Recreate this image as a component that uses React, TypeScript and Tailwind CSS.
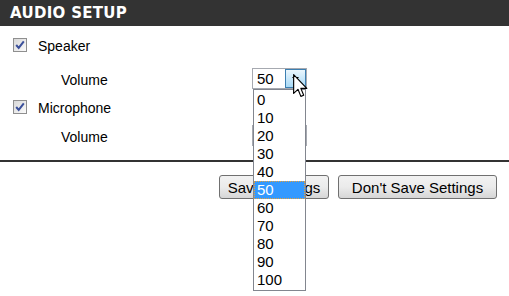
import React from "react";

const volumes = ["0", "10", "20", "30", "40", "50", "60", "70", "80", "90", "100"];

function CheckBox() {
  return (
    <span className="relative inline-block w-[14px] h-[14px] border border-[#8f8f8f] bg-gradient-to-br from-[#d8d8d8] to-[#fbfbfb]">
      <svg viewBox="0 0 14 14" className="absolute -left-px -top-px w-[14px] h-[14px]">
        <path d="M3.2 7 L5.7 9.9 L10.8 3.4" fill="none" stroke="#3a4f9a" strokeWidth="2" />
      </svg>
    </span>
  );
}

function SelectBox({ open }: { open?: boolean }) {
  return (
    <div className="relative w-[55px] h-[21px] border border-[#a6a9b0] bg-white flex items-center">
      <span className="pl-[4px] text-[15px] leading-none text-black">50</span>
      <div
        className={`absolute right-0 top-0 w-[21px] h-[19px] flex items-center justify-center ${
          open
            ? "border border-[#3c7fb1] bg-gradient-to-b from-[#eaf6fd] to-[#a7d9f5]"
            : "border border-[#b8b8b8] bg-gradient-to-b from-[#f2f2f2] to-[#d8d8d8]"
        }`}
      >
        <svg viewBox="0 0 7 4" className="w-[7px] h-[4px]">
          <path d="M0 0 H7 L3.5 4 Z" fill="#000" />
        </svg>
      </div>
    </div>
  );
}

function Cursor() {
  return (
    <svg viewBox="0 0 13 21" className="w-[15px] h-[24px]">
      <path
        d="M0.5 0.5 V17 L4.3 13.4 L6.8 19.6 L9.3 18.6 L6.8 12.6 L12 12.6 Z"
        fill="#fff"
        stroke="#000"
        strokeWidth="1"
        strokeLinejoin="round"
      />
    </svg>
  );
}

function Button({ label, width }: { label: string; width: string }) {
  return (
    <button
      className={`${width} h-[24px] rounded-[3px] border border-[#707070] bg-gradient-to-b from-[#f2f2f2] via-[#ebebeb] to-[#d6d6d6] text-[15px] leading-none text-black flex items-center justify-center`}
    >
      {label}
    </button>
  );
}

export default function App() {
  return (
    <div className="relative w-[509px] h-[296px] bg-white overflow-hidden font-['Liberation_Sans',Arial,sans-serif] text-[14px] text-black">
      {/* Header */}
      <div className="h-[26px] bg-[#333333] flex items-center pl-[10px]">
        <span className="text-white font-['DejaVu_Sans',Verdana,sans-serif] font-bold text-[15px] tracking-[0.3px] leading-none">
          AUDIO SETUP
        </span>
      </div>

      {/* Settings rows */}
      <div className="pt-[8px]">
        <div className="h-[22px] flex items-center pl-[13px] gap-[11px]">
          <CheckBox />
          <span className="pt-[3px]">Speaker</span>
        </div>
        <div className="mt-[12px] h-[21px] flex items-center">
          <span className="w-[252px] shrink-0 pl-[61px] pt-[3px]">Volume</span>
          <SelectBox open />
        </div>
        <div className="mt-[7px] h-[22px] flex items-center pl-[13px] gap-[11px]">
          <CheckBox />
          <span className="pt-[3px]">Microphone</span>
        </div>
        <div className="mt-[7px] h-[21px] flex items-center">
          <span className="w-[252px] shrink-0 pl-[61px] pt-[3px]">Volume</span>
          <SelectBox />
        </div>
      </div>

      <div className="mt-[14px] h-[2px] bg-[#333333]" />

      <div className="mt-[13px] flex justify-end gap-[9px] pr-[12px]">
        <Button label="Save Settings" width="w-[110px]" />
        <Button label="Don't Save Settings" width="w-[159px]" />
      </div>

      {/* Open dropdown list */}
      <div className="absolute left-[253px] top-[89px] w-[53px] border border-[#82868f] bg-white py-px">
        {volumes.map((v) => (
          <div
            key={v}
            className={`h-[18px] pl-[3px] text-[15px] leading-[18px] ${
              v === "50" ? "bg-[#3399ff] text-white outline outline-1 outline-dotted outline-[#e5a03c] -outline-offset-1" : "text-black"
            }`}
          >
            {v}
          </div>
        ))}
      </div>

      {/* Mouse pointer */}
      <div className="absolute left-[293px] top-[74px]">
        <Cursor />
      </div>
    </div>
  );
}
